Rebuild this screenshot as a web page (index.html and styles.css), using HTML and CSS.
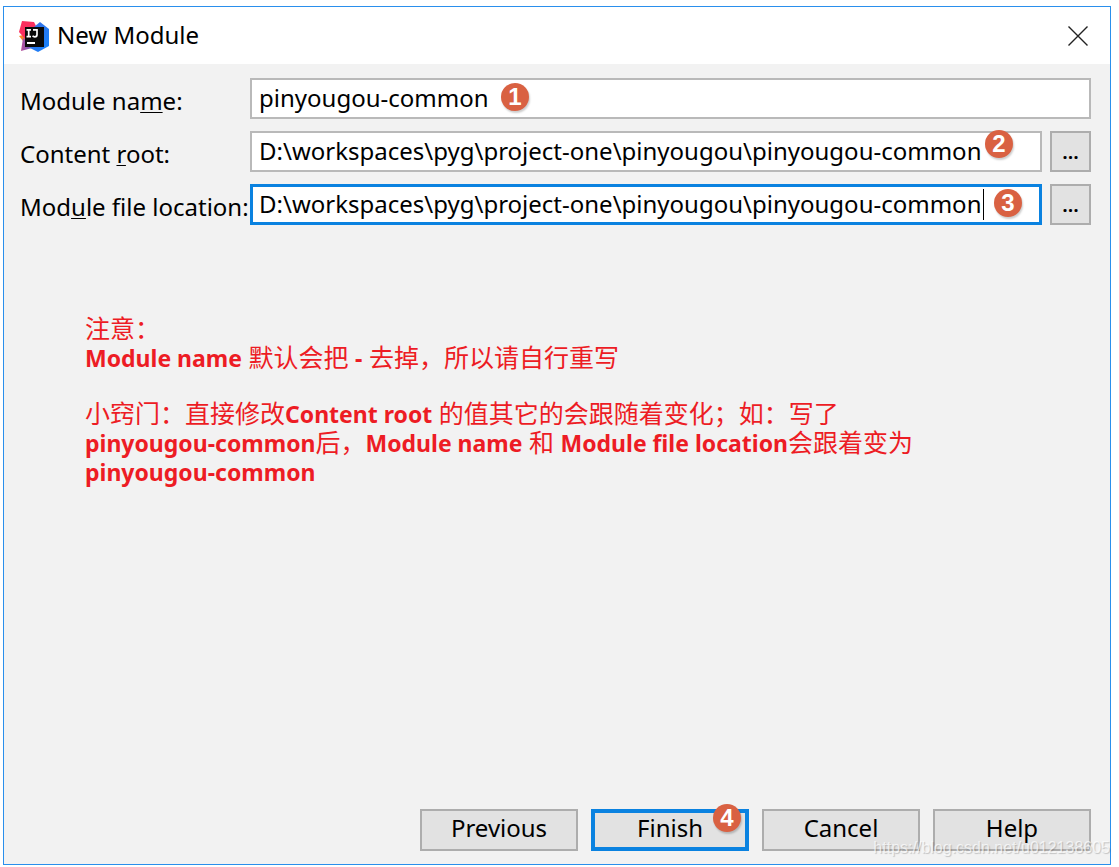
FILE: index.html
```html
<!DOCTYPE html>
<html lang="zh-CN">
<head>
  <meta charset="UTF-8" />
  <meta name="viewport" content="width=device-width, initial-scale=1.0"/>
  <title>New Module</title>
  <link rel="stylesheet" href="styles.css">
</head>
<body>

  <form class="dialog">
    <header class="titlebar">
      <svg class="logo" viewBox="0 0 32 32" aria-hidden="true">
        <defs>
          <linearGradient id="blue" x1="0" y1="0" x2="1" y2="1">
            <stop offset="0" stop-color="#3b6be0"/>
            <stop offset="1" stop-color="#1485ff"/>
          </linearGradient>
          <linearGradient id="violet" x1="0" y1="0" x2="1" y2="0">
            <stop offset="0" stop-color="#b8509a"/>
            <stop offset="1" stop-color="#5b62c8"/>
          </linearGradient>
        </defs>
        <path d="M1 16 L9 14 L9 22 L5 21 Z" fill="#f58529"/>
        <path d="M4 1 L16 2 L19 8 L8 20 L1 12 Z" fill="#fb2f5f"/>
        <path d="M5 18 L16 24 L14 28 L3 31 Z" fill="url(#violet)"/>
        <path d="M16 7 L22 2 L31 9 L31 26 L20 32 L12 28 Z" fill="url(#blue)"/>
        <rect x="7" y="7" width="19" height="20" fill="#0a0a0a"/>
        <path d="M8.5 9.8 H13 M10.7 9.8 V16.6 M8.5 16.6 H13 M15 9.8 H19 V14.8 Q19 16.8 16.8 16.8 Q15.4 16.8 14.6 15.8" fill="none" stroke="#fff" stroke-width="1.7"/>
        <rect x="9" y="22" width="8" height="2" fill="#fff"/>
      </svg>
      <h1>New Module</h1>
      <button type="button" class="close" aria-label="Close">
        <svg viewBox="0 0 20 20"><path d="M0.5 0.5 L19.5 19.5 M19.5 0.5 L0.5 19.5"/></svg>
      </button>
    </header>

    <div class="fields">
      <label for="moduleName">Module na<u>m</u>e:</label>
      <div class="field wide">
        <input type="text" id="moduleName" value="pinyougou-common">
        <span class="badge step-1">1</span>
      </div>

      <label for="contentRoot">Content <u>r</u>oot:</label>
      <div class="field">
        <input type="text" id="contentRoot" value="D:\workspaces\pyg\project-one\pinyougou\pinyougou-common">
        <span class="badge step-2">2</span>
      </div>
      <button type="button" class="browse" aria-label="Browse content root">...</button>

      <label for="fileLocation">Mod<u>u</u>le file location:</label>
      <div class="field">
        <input type="text" id="fileLocation" class="active" value="D:\workspaces\pyg\project-one\pinyougou\pinyougou-common">
        <span class="caret"></span>
        <span class="badge step-3">3</span>
      </div>
      <button type="button" class="browse" aria-label="Browse module file location">...</button>
    </div>

    <div class="notes">
      <p>注意：<br><b>Module name</b> 默认会把 <b>-</b> 去掉，所以请自行重写</p>
      <p>小窍门：直接修改<b>Content root</b> 的值其它的会跟随着变化；如：写了<br><b>pinyougou-common</b>后，<b>Module name</b> 和 <b>Module file location</b>会跟着变为<br><b>pinyougou-common</b></p>
    </div>

    <footer class="actions">
      <button type="button">Previous</button>
      <button type="submit" class="primary">Finish<span class="badge step-4">4</span></button>
      <button type="button">Cancel</button>
      <button type="button">Help</button>
    </footer>
  </form>

  <div class="watermark">https://blog.csdn.net/u012138605</div>

</body>
</html>
```

FILE: styles.css
```css
* {
  box-sizing: border-box;
}

body {
  margin: 0;
  padding: 6px 8px 2px 3px;
  min-height: 100vh;
  display: flex;
  background: white;
  color: #000;
  font-family: "Noto Sans", "Noto Sans CJK SC", sans-serif;
  font-size: 24px;
}

button, input {
  font: inherit;
  color: inherit;
  border-radius: 0;
}

.dialog {
  flex: 1;
  display: flex;
  flex-direction: column;
  border: 1px solid #2a8fec;
  background: #f2f2f2;
}

.titlebar {
  display: flex;
  align-items: center;
  height: 57px;
  padding: 0 22px 0 14px;
  background: white;
}

.logo {
  width: 32px;
  height: 32px;
}

h1 {
  flex: 1;
  margin: 0 0 0 7px;
  padding-bottom: 3px;
  font-size: 24px;
  font-weight: normal;
}

.close {
  display: flex;
  padding: 0;
  border: none;
  background: none;
}

.close svg {
  width: 20px;
  height: 20px;
  fill: none;
  stroke: #222;
  stroke-width: 1.4;
}

.fields {
  display: grid;
  grid-template-columns: 222px 1fr 41px;
  gap: 12px 8px;
  padding: 14px 19px 0 16px;
}

.fields label {
  padding-top: 5px;
  line-height: 36px;
  white-space: nowrap;
}

.fields u {
  text-decoration-thickness: 1px;
  text-underline-offset: 2px;
}

.field {
  position: relative;
}

.wide {
  grid-column: span 2;
}

.field input {
  display: block;
  width: 100%;
  height: 41px;
  padding: 0 6px 2px 7px;
  border: 2px solid #b9b9b9;
  background: white;
  outline: none;
}

.field .active {
  padding-left: 6px;
  border: 3px solid #0a82e0;
}

.browse, .actions button {
  padding: 0;
  border: 2px solid #adadad;
  background: #e2e2e2;
}

.browse {
  height: 41px;
  font-size: 20px;
  font-weight: 600;
}

.caret {
  position: absolute;
  top: 5px;
  left: 733px;
  width: 1px;
  height: 31px;
  background: #000;
}

.badge {
  position: absolute;
  width: 28px;
  height: 28px;
  border-radius: 50%;
  background: #d96142;
  box-shadow: 1px 2px 2px rgba(0, 0, 0, 0.2);
  color: white;
  font-family: "Liberation Sans", sans-serif;
  font-size: 24px;
  font-weight: bold;
  line-height: 28px;
  text-align: center;
}

.step-1 {
  top: 5px;
  left: 251px;
}

.step-2 {
  top: -1px;
  left: 735px;
}

.step-3 {
  top: 5px;
  left: 744px;
}

.notes {
  flex: 1;
  padding: 89px 80px 0 81px;
  color: #ed1c24;
  font-size: 25px;
  line-height: 29px;
}

.notes p {
  margin: 0 0 27px;
}

.notes b {
  font-size: 23px;
  line-height: 1;
}

.actions {
  display: flex;
  justify-content: flex-end;
  gap: 13px;
  padding: 0 19px 13px;
}

.actions button {
  position: relative;
  width: 158px;
  height: 42px;
  padding-bottom: 4px;
  line-height: 34px;
}

.actions .primary {
  border: 4px solid #0a82e0;
  line-height: 30px;
}

.actions .step-4 {
  top: -9px;
  left: 118px;
  line-height: 28px;
}

.watermark {
  position: absolute;
  right: 9px;
  bottom: 10px;
  color: rgba(255, 255, 255, 0.7);
  font-family: "Liberation Sans", sans-serif;
  font-size: 16px;
  text-shadow: 1px 1px 1px rgba(0, 0, 0, 0.2);
}
```
